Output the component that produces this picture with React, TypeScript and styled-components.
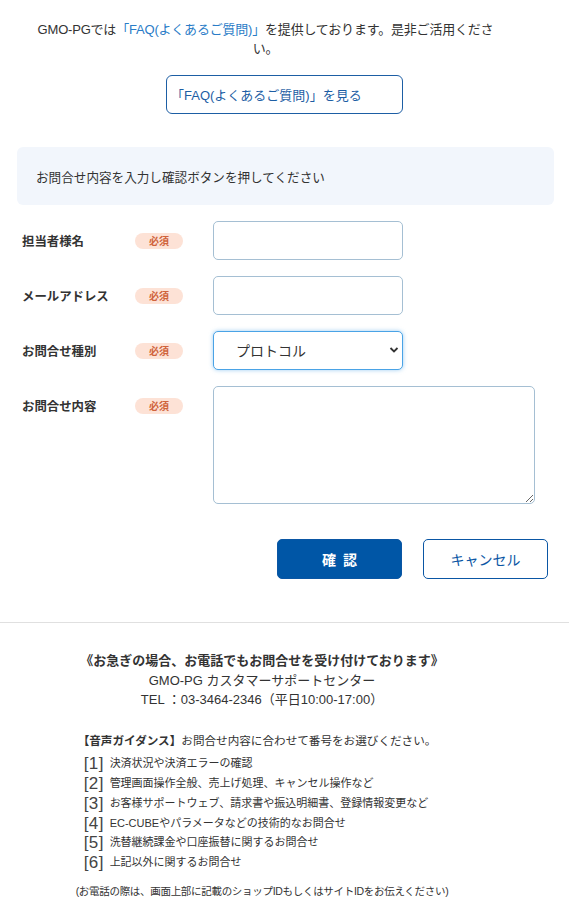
import React from "react";
import styled, { createGlobalStyle } from "styled-components";

const GlobalStyle = createGlobalStyle`
  body {
    margin: 0;
    background: #ffffff;
    color: #333333;
    font-family: "Liberation Sans", "Noto Sans CJK JP", sans-serif;
  }
  * { box-sizing: border-box; }
`;

const Page = styled.div`
  width: 569px;
  padding-top: 20px;
`;

const Intro = styled.p`
  margin: 0;
  padding: 0 68px 0 30px;
  font-size: 13px;
  letter-spacing: -0.2px;
  line-height: 19px;
  text-align: center;
  color: #333;
`;

const Link = styled.a`
  color: #2a7cc7;
  text-decoration: none;
`;

const FaqWrap = styled.div`
  display: flex;
  justify-content: center;
  margin-top: 17px;
`;

const FaqButton = styled.a`
  display: flex;
  align-items: center;
  width: 237px;
  height: 39px;
  padding-left: 4px;
  border: 1px solid #1d5ea4;
  border-radius: 6px;
  color: #1d5ea4;
  font-size: 13px;
  text-decoration: none;
  background: #fff;
`;

const Form = styled.div`
  padding: 0 15px 0 17px;
  margin-top: 33px;
`;

const Notice = styled.div`
  height: 58px;
  display: flex;
  align-items: center;
  padding-left: 19px;
  background: #f2f6fc;
  border-radius: 6px;
  font-size: 12.6px;
  color: #333;
`;

const Rows = styled.div`
  display: flex;
  flex-direction: column;
  gap: 16px;
  margin-top: 16px;
`;

const Row = styled.div`
  display: grid;
  grid-template-columns: 113px 78px 1fr;
  align-items: start;
  padding-left: 5px;
`;

const Label = styled.div`
  height: 39px;
  display: flex;
  align-items: center;
  font-size: 12.4px;
  font-weight: 700;
  color: #333;
`;

const BadgeCell = styled.div`
  height: 39px;
  display: flex;
  align-items: center;
`;

const Badge = styled.span`
  display: inline-flex;
  align-items: center;
  justify-content: center;
  width: 48px;
  height: 16px;
  border-radius: 8px;
  background: #fde2d6;
  color: #d0643c;
  font-size: 10px;
  font-weight: 700;
`;

const fieldBase = `
  border: 1px solid #a5bfd3;
  border-radius: 5px;
  background: #fff;
  font-family: "Liberation Sans", "Noto Sans CJK JP", sans-serif;
  font-size: 14px;
  color: #333;
  outline: none;
`;

const Input = styled.input`
  ${fieldBase}
  width: 190px;
  height: 39px;
  padding: 0 10px;
`;

const SelectBox = styled.div`
  position: relative;
  width: 190px;
  height: 39px;
`;

const Select = styled.select`
  ${fieldBase}
  appearance: none;
  width: 100%;
  height: 100%;
  padding: 0 0 0 22px;
  border-color: #4aa3e6;
  box-shadow: 0 0 4px rgba(74, 163, 230, 0.55);
`;

const Chevron = styled.svg`
  position: absolute;
  right: 4px;
  top: 15px;
  pointer-events: none;
`;

const TextArea = styled.textarea`
  ${fieldBase}
  width: 322px;
  height: 118px;
  resize: both;
  padding: 8px 10px;
`;

const Actions = styled.div`
  display: flex;
  justify-content: flex-end;
  gap: 21px;
  margin-top: 35px;
  padding-right: 6px;
`;

const Button = styled.button<{ $primary?: boolean }>`
  width: 125px;
  height: 40px;
  border-radius: 5px;
  border: 1px solid #0a56a4;
  background: ${(p) => (p.$primary ? "#0056a6" : "#ffffff")};
  color: ${(p) => (p.$primary ? "#ffffff" : "#0a56a4")};
  font-family: "Liberation Sans", "Noto Sans CJK JP", sans-serif;
  font-size: 14px;
  font-weight: ${(p) => (p.$primary ? 700 : 400)};
  letter-spacing: ${(p) => (p.$primary ? "7px" : "0")};
  text-indent: ${(p) => (p.$primary ? "7px" : "0")};
  cursor: pointer;
`;

const Divider = styled.hr`
  margin: 43px 0 0;
  border: 0;
  border-top: 1px solid #e0e0e0;
`;

const Footer = styled.div`
  padding: 28px 45px 24px 0;
  text-align: center;
  font-size: 13px;
  line-height: 19.5px;
  color: #333;
`;

const Strong = styled.div`
  font-weight: 700;
`;

const Guide = styled.div`
  display: inline-block;
  text-align: left;
  margin: 21px 10px 0 0;
  font-size: 12px;
  line-height: 19.8px;
`;

const GuideHead = styled.div`
  font-size: 11.6px;
  margin-bottom: 4px;
`;

const GuideItem = styled.div`
  display: flex;
  align-items: center;
  height: 19.8px;
  padding-left: 6px;
  font-size: 11px;
`;

const Num = styled.span`
  font-size: 17px;
  width: 26px;
  letter-spacing: 0.5px;
  color: #444;
`;

const Note = styled.div`
  margin-top: 8px;
  font-size: 10.5px;
  letter-spacing: -0.3px;
`;

const rows = [
  { label: "担当者様名", kind: "input" },
  { label: "メールアドレス", kind: "input" },
  { label: "お問合せ種別", kind: "select" },
  { label: "お問合せ内容", kind: "textarea" },
];

const guide = [
  "決済状況や決済エラーの確認",
  "管理画面操作全般、売上げ処理、キャンセル操作など",
  "お客様サポートウェブ、請求書や振込明細書、登録情報変更など",
  "EC-CUBEやパラメータなどの技術的なお問合せ",
  "洗替継続課金や口座振替に関するお問合せ",
  "上記以外に関するお問合せ",
];

export default function App() {
  return (
    <Page>
      <GlobalStyle />
      <Intro>
        GMO-PGでは<Link href="#">「FAQ(よくあるご質問)」</Link>を提供しております。是非ご活用ください。
      </Intro>
      <FaqWrap>
        <FaqButton href="#">「FAQ(よくあるご質問)」を見る</FaqButton>
      </FaqWrap>

      <Form>
        <Notice>お問合せ内容を入力し確認ボタンを押してください</Notice>
        <Rows>
          {rows.map((r) => (
            <Row key={r.label}>
              <Label>{r.label}</Label>
              <BadgeCell>
                <Badge>必須</Badge>
              </BadgeCell>
              {r.kind === "input" && <Input type="text" />}
              {r.kind === "select" && (
                <SelectBox>
                  <Select defaultValue="protocol">
                    <option value="protocol">プロトコル</option>
                  </Select>
                  <Chevron width="10" height="8" viewBox="0 0 10 8">
                    <path d="M1.5 2 L5 5.5 L8.5 2" fill="none" stroke="#333" strokeWidth="1.8" />
                  </Chevron>
                </SelectBox>
              )}
              {r.kind === "textarea" && <TextArea />}
            </Row>
          ))}
        </Rows>
        <Actions>
          <Button $primary>確認</Button>
          <Button>キャンセル</Button>
        </Actions>
      </Form>

      <Divider />

      <Footer>
        <Strong>《お急ぎの場合、お電話でもお問合せを受け付けております》</Strong>
        <div>GMO-PG カスタマーサポートセンター</div>
        <div>TEL ：03-3464-2346（平日10:00-17:00）</div>
        <Guide>
          <GuideHead>
            <b>【音声ガイダンス】</b>お問合せ内容に合わせて番号をお選びください。
          </GuideHead>
          {guide.map((g, i) => (
            <GuideItem key={i}>
              <Num>[{i + 1}]</Num>
              {g}
            </GuideItem>
          ))}
        </Guide>
        <Note>(お電話の際は、画面上部に記載のショップIDもしくはサイトIDをお伝えください)</Note>
      </Footer>
    </Page>
  );
}
